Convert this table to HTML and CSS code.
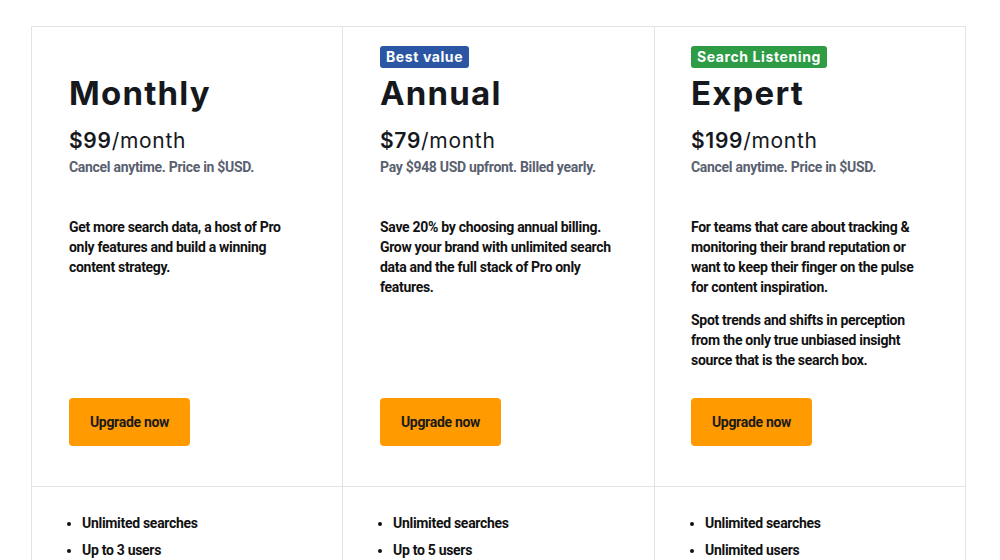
FILE: index.html
```html
<!DOCTYPE html>
<html lang="en">
<head>
<meta charset="utf-8">
<title>Pricing</title>
<link rel="stylesheet" href="styles.css">
</head>
<body>
<div class="plans">
  <section class="plan">
    <div class="badge-row"></div>
    <h2 class="title">Monthly</h2>
    <div class="price"><strong>$99</strong>/month</div>
    <div class="note">Cancel anytime. Price in $USD.</div>
    <div class="desc">
      <p>Get more search data, a host of Pro only features and build a winning content strategy.</p>
    </div>
    <button class="btn">Upgrade now</button>
  </section>
  <section class="plan">
    <div class="badge-row"><span class="badge badge-blue">Best value</span></div>
    <h2 class="title">Annual</h2>
    <div class="price"><strong>$79</strong>/month</div>
    <div class="note">Pay $948 USD upfront. Billed yearly.</div>
    <div class="desc">
      <p>Save 20% by choosing annual billing. Grow your brand with unlimited search data and the full stack of Pro only features.</p>
    </div>
    <button class="btn">Upgrade now</button>
  </section>
  <section class="plan">
    <div class="badge-row"><span class="badge badge-green">Search Listening</span></div>
    <h2 class="title">Expert</h2>
    <div class="price"><strong>$199</strong>/month</div>
    <div class="note">Cancel anytime. Price in $USD.</div>
    <div class="desc">
      <p>For teams that care about tracking &amp; monitoring their brand reputation or want to keep their finger on the pulse for content inspiration.</p>
      <p>Spot trends and shifts in perception from the only true unbiased insight source that is the search box.</p>
    </div>
    <button class="btn">Upgrade now</button>
  </section>
  <ul class="features">
    <li>Unlimited searches</li>
    <li>Up to 3 users</li>
  </ul>
  <ul class="features">
    <li>Unlimited searches</li>
    <li>Up to 5 users</li>
  </ul>
  <ul class="features">
    <li>Unlimited searches</li>
    <li>Unlimited users</li>
  </ul>
</div>
</body>
</html>
```

FILE: styles.css
```css
* { box-sizing: border-box; }
html, body { margin: 0; padding: 0; background: #fff; }
body {
  font-family: Roboto, "Liberation Sans", Arial, sans-serif;
  color: #111;
  padding: 26px 0 0 31px;
}
.plans {
  width: 935px;
  display: grid;
  grid-template-columns: 310px 312px 311px;
  border: 1px solid #e3e3e3;
}
.plan {
  display: flex;
  flex-direction: column;
  align-items: flex-start;
  padding: 19px 28px 40px 37px;
  border-bottom: 1px solid #e3e3e3;
}
.plan + .plan, .features + .features { border-left: 1px solid #e3e3e3; }
.plan:last-of-type { padding-left: 36px; }
.badge-row { height: 22px; display: flex; }
.badge {
  display: inline-block;
  height: 22px;
  line-height: 22px;
  padding: 0 6px;
  border-radius: 3px;
  color: #fff;
  font-family: Inter, "Open Sans", sans-serif;
  font-weight: 700;
  font-size: 14px;
  letter-spacing: 0.6px;
}
.badge-blue { background: #2b56a3; }
.badge-green { background: #2e9b45; }
.title {
  margin: 5px 0 0;
  font-family: Inter, "Open Sans", sans-serif;
  font-weight: 700;
  font-size: 33px;
  line-height: 40px;
  letter-spacing: 1.2px;
  color: #15181d;
}
.price {
  margin-top: 15px;
  font-family: Inter, "Open Sans", sans-serif;
  font-size: 21px;
  line-height: 26px;
  font-weight: 400;
  letter-spacing: 0.7px;
  color: #15181d;
}
.price strong { font-weight: 600; }
.note {
  margin-top: 3px;
  font-size: 14px;
  line-height: 20px;
  font-weight: 700;
  letter-spacing: -0.3px;
  color: #596170;
}
.desc {
  max-width: 234px;
  margin-top: 40px;
  margin-bottom: 28px;
  font-size: 14px;
  line-height: 20px;
  font-weight: 700;
  letter-spacing: -0.3px;
}
.desc p { margin: 0 0 13px; }
.desc p:last-child { margin-bottom: 0; }
.btn {
  margin-top: auto;
  width: 121px;
  height: 48px;
  border: 0;
  border-radius: 4px;
  background: #ff9a00;
  color: #1a1a1a;
  font-family: Roboto, "Liberation Sans", sans-serif;
  font-weight: 700;
  font-size: 14px;
  letter-spacing: -0.3px;
  cursor: pointer;
}
.features {
  margin: 0;
  padding: 26px 20px 20px 50px;
  font-size: 14px;
  line-height: 20px;
  font-weight: 700;
  letter-spacing: -0.3px;
}
.features li { margin-bottom: 7px; }
```
